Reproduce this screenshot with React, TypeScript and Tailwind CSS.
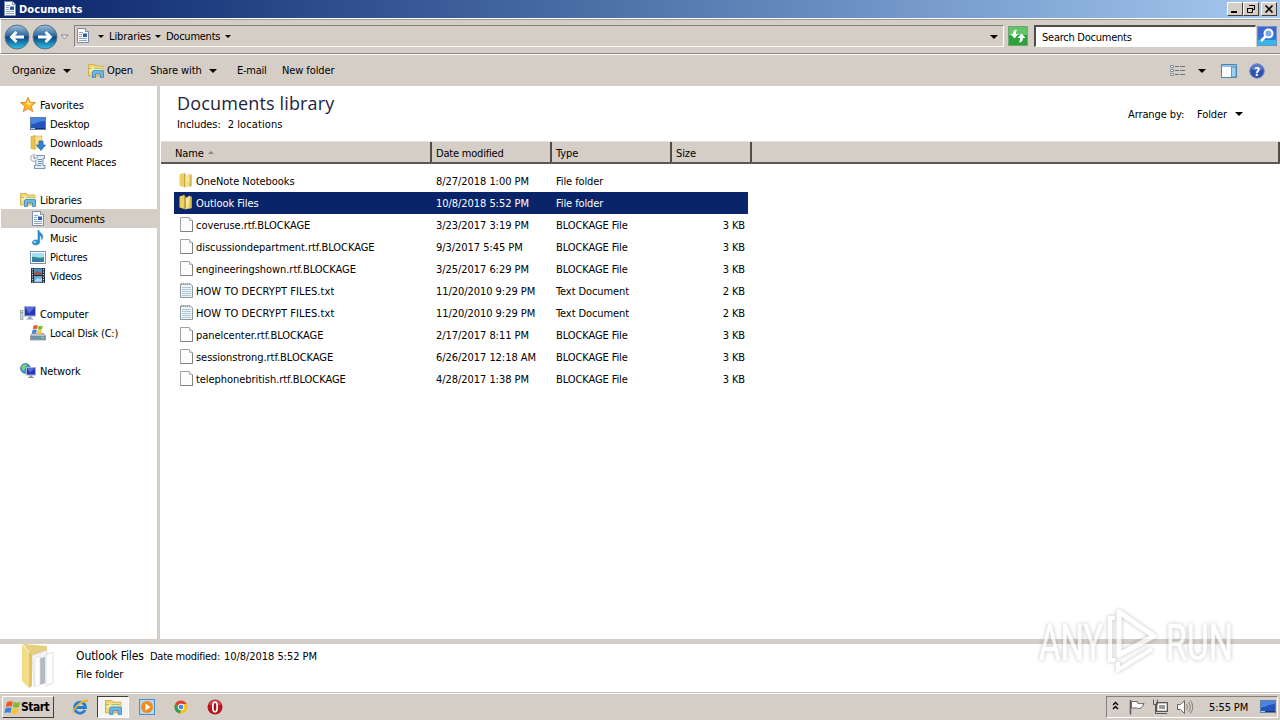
import React from 'react';

type IconProps = { className?: string };

const Svg = ({ size = 16, children }: { size?: number; children: React.ReactNode }) => (
  <svg width={size} height={size} viewBox="0 0 16 16" className="shrink-0">
    {children}
  </svg>
);

const DocIcon = () => (
  <Svg>
    <path d="M2.500.5h8l3 3v11h-11z" fill="#fcfdff" stroke="#7b8eab" />
    <path d="M10.500.5v3h3" fill="#dfe8f5" stroke="#7b8eab" />
    <path d="M4 4.500h4M4 6.500h3M4 8.500h3M4 10.500h8M4 12.500h8" stroke="#8fa3c0" />
    <rect x="8" y="5.500" width="4" height="3.500" fill="#2b5fae" />
  </Svg>
);

const StarIcon = () => (
  <Svg>
    <path d="M8 .3l2.100 5 5.300.4-4.100 3.500 1.400 5.300L8 11.600 3.300 14.500l1.400-5.300L.6 5.700l5.300-.4z" fill="#fdb827" stroke="#e58a2c" />
    <path d="M8 2.500l1.400 3.600 3.200.4-3 1.500L8 7.500 5 6.500l1.700-.6z" fill="#ffe680" />
  </Svg>
);

const DesktopIcon = () => (
  <Svg>
    <rect x=".5" y="1.500" width="15" height="12" fill="#2356b8" stroke="#5f7cab" />
    <path d="M1 2h14v3C9 5 6 8 1 8.500z" fill="#4b84df" />
    <path d="M1 12.500h14" stroke="#16346e" />
    <path d="M1 12.500h4" stroke="#a9d4f5" />
  </Svg>
);

const DownloadsIcon = () => (
  <Svg>
    <path d="M1 1.500l4-1v14l-4-1z" fill="#e9c452" stroke="#c9a23a" strokeWidth=".6" />
    <path d="M5 1h7v12H5z" fill="#f8e08b" stroke="#d2b04c" strokeWidth=".6" />
    <path d="M9 6h4v4h2.500L11 15.500 6.500 10H9z" fill="#2f83d6" stroke="#1b5ba5" strokeWidth=".7" />
  </Svg>
);

const RecentIcon = () => (
  <Svg>
    <path d="M5 1.500h9.500v3h-1.500v7h2v3H4.500v-3H6z" fill="#e3ebf4" stroke="#7d92ab" />
    <path d="M8 5.500h4M8 7.500h4M8 9.500h4M7 11.500h4" stroke="#6f92bd" />
    <circle cx="4" cy="4" r="3.400" fill="#f4f8fc" stroke="#a0abb8" />
    <path d="M4 2v2.300h1.800" fill="none" stroke="#4b5f78" strokeWidth=".8" />
  </Svg>
);

const LibraryIcon = ({ size = 16 }: { size?: number }) => (
  <Svg size={size}>
    <path d="M.5 1.500h6l1 1.500h7.500v10H.5z" fill="#f3d66f" stroke="#c9a843" strokeWidth=".8" />
    <path d="M2 4.300h12.500v4.500H1.500z" fill="#fbedaa" />
    <path d="M1 5.300h3M6 5.300h8" stroke="#79b86a" strokeWidth=".8" />
    <path d="M4.500 14.500V9q0-1.500 1.500-1.500h8q1.500 0 1.500 1.500v5.500h-3V11h-5v3.500z" fill="#6db7e8" stroke="#3c83bd" strokeWidth=".8" />
  </Svg>
);

const MusicIcon = () => (
  <Svg>
    <path d="M8.500 0c.5 2.800 4.800 3.500 4.300 7.500-.1 1-.6 1.700-1.100 2.200.5-2.500-.8-3.700-2-4.200V12c0 1.700-1.800 3-4 3-2 0-3.500-.9-3.500-2.400 0-1.700 2-3 4.300-2.600.7.100 1.200.3 1.500.5V0z" fill="#2b93d1" stroke="#1c6ca8" strokeWidth=".5" />
    <ellipse cx="4.800" cy="12" rx="1.500" ry="1" fill="#9ddcf5" />
  </Svg>
);

const PicturesIcon = () => (
  <Svg>
    <rect x=".5" y="2.500" width="15" height="12" fill="#fff" stroke="#7690ad" />
    <rect x="2" y="4" width="12" height="9" fill="#a8dcf5" />
    <path d="M2 8c4-1 6 2 12 0v5H2z" fill="#2f8f86" />
    <path d="M2 11q6-1.500 12 0v2H2z" fill="#3a78b5" />
  </Svg>
);

const VideosIcon = () => (
  <Svg>
    <rect x="1" y="0" width="14" height="15" fill="#26313e" />
    <rect x="4" y=".5" width="8" height="6.500" fill="#4b92c9" />
    <rect x="4" y="8" width="8" height="6.500" fill="#5fa7dd" />
    <path d="M4 5.500l3-3 2 2 1-1 2 3V7H4z" fill="#9a5947" />
    <path d="M5 12.500l3-3 2 2 2-2v4H5z" fill="#b8dcf4" />
    <path d="M2.500 1v14M13.500 1v14" stroke="#d6dde4" strokeDasharray="1.200 1.300" />
  </Svg>
);

const ComputerIcon = () => (
  <Svg>
    <rect x=".5" y="4.500" width="2.500" height="9" fill="#c9d4d6" stroke="#8e9c9e" strokeWidth=".7" />
    <path d="M1 6.500h1.500" stroke="#58b148" />
    <rect x="4.500" y=".5" width="11" height="9.500" fill="#2638b8" stroke="#a7b3c6" />
    <path d="M5 1h10L9 7.500z" fill="#6d83ec" opacity=".7" />
    <path d="M8.500 10.500h3v2h2v1h-7v-1h2z" fill="#909caa" />
  </Svg>
);

const Flag = () => (
  <>
    <path d="M3.500 2.500Q5.500 1 7.800 2L7 5.500Q5 4.600 2.700 6z" fill="#ee5a24" />
    <path d="M8.500 2.200q2.200 1 4.500-.2L12 5.700Q9.800 6.800 7.700 5.700z" fill="#7ebd2e" />
    <path d="M2.500 6.700q2.200-1.300 4.400-.4L6 9.800Q4 8.900 1.700 10z" fill="#3c83de" />
    <path d="M7.500 6.500q2.200 1 4.500-.2l-1 3.700q-2.200 1-4.300 0z" fill="#fbc52c" />
  </>
);

const DiskIcon = () => (
  <Svg>
    <path d="M2.500 8.500h11l2 2v4.500H.5v-4.500z" fill="#b8c1ca" stroke="#73818f" strokeWidth=".7" />
    <path d="M1 11h14v3.500H1z" fill="#6e92a8" />
    <path d="M11 12.500h3" stroke="#7cf27a" />
    <g transform="translate(0 -1.500)">
      <Flag />
    </g>
  </Svg>
);

const NetworkIcon = () => (
  <Svg>
    <circle cx="5.500" cy="5.500" r="5" fill="#3b96cf" stroke="#2b6e9f" strokeWidth=".6" />
    <path d="M2 3q3-3 5-1L5 5 4 8Q1 7 2 3z" fill="#7cd37a" />
    <rect x="6.500" y="4.500" width="9" height="7.500" fill="#2638b8" stroke="#a7b3c6" />
    <path d="M7 5h8l-5 4.500z" fill="#6d83ec" opacity=".7" />
    <path d="M9.500 12.500h3V14h1.500v1H8v-1h1.500z" fill="#8994a5" />
  </Svg>
);

const FolderIcon = () => (
  <Svg>
    <path d="M.5 1.500L5 0v14L.5 12.500z" fill="#eccf68" />
    <path d="M5 0l1.500 1v13.500L5 14z" fill="#c9a437" />
    <path d="M6.500 3L11 .5v12.500l-4.500 1.500z" fill="#f3df8b" />
    <path d="M11 1.500h1.800v11.500L10 14z" fill="#d8bb54" />
    <path d="M8 4v4" stroke="#fff6cf" />
  </Svg>
);

const BlankFileIcon = () => (
  <Svg>
    <path d="M1.500.5h9l3 3v11h-12z" fill="#fcfcfc" stroke="#a0a0a0" />
    <path d="M1.500 14.500h12v-11" fill="none" stroke="#808080" />
    <path d="M10.500.5v3h3" fill="#ececec" stroke="#b4b4b4" />
  </Svg>
);

const TextFileIcon = () => (
  <Svg>
    <path d="M1.500 1h10l2 2v11.500h-12z" fill="#eef4f7" stroke="#8d989d" />
    <path d="M3 4.500h9M3 6.500h9M3 8.500h9M3 10.500h9M3 12.500h9" stroke="#9fbccb" strokeWidth=".8" />
    <path d="M2 1h10" stroke="#6f7d84" strokeDasharray="1 1" />
  </Svg>
);

const BigFolderIcon = () => (
  <svg width="36" height="46" viewBox="0 0 36 46" className="shrink-0">
    <path d="M3 0l24 2v6l-15 3z" fill="#e5cf80" />
    <path d="M12 12l15-6v32l-13 4z" fill="#f4f4f4" stroke="#d8d8d8" strokeWidth=".7" />
    <path d="M20 14l5-1v26l-5 2z" fill="#b3bac4" />
    <path d="M15 14l5-2v29l-5 2z" fill="#fff" stroke="#dedede" strokeWidth=".7" />
    <path d="M26 11l7-3v31l-7 3z" fill="#fff" stroke="#d3d3d3" strokeWidth=".7" />
    <path d="M2 0l7 8v36l-7-7z" fill="#f3dd88" />
    <path d="M9 8l3 2v32l-3 2z" fill="#e0c467" />
  </svg>
);

const Caret = ({ className = '' }: IconProps) => (
  <svg width="8" height="4" viewBox="0 0 8 4" className={`shrink-0 ${className}`}>
    <path d="M0 0h8L4 4z" fill="currentColor" />
  </svg>
);

const NavButton = ({ flip = false }: { flip?: boolean }) => (
  <svg width="26" height="26" viewBox="0 0 26 26" className="shrink-0">
    <defs>
      <linearGradient id="orb" x1="0" y1="0" x2="0" y2="1">
        <stop offset="0" stopColor="#9fc0da" />
        <stop offset=".45" stopColor="#2d689f" />
        <stop offset=".5" stopColor="#0d447e" />
        <stop offset="1" stopColor="#2ec3e8" />
      </linearGradient>
    </defs>
    <circle cx="13" cy="13" r="12" fill="url(#orb)" stroke="#5b7289" />
    <g transform={flip ? 'translate(26 0) scale(-1 1)' : undefined}>
      <path d="M20 13H8M12.500 8L7.500 13l5 5" fill="none" stroke="#fff" strokeWidth="2.800" />
    </g>
  </svg>
);

const places = [
  {
    label: 'Favorites', icon: <StarIcon />, children: [
      { label: 'Desktop', icon: <DesktopIcon /> },
      { label: 'Downloads', icon: <DownloadsIcon /> },
      { label: 'Recent Places', icon: <RecentIcon /> },
    ],
  },
  {
    label: 'Libraries', icon: <LibraryIcon />, children: [
      { label: 'Documents', icon: <DocIcon />, active: true },
      { label: 'Music', icon: <MusicIcon /> },
      { label: 'Pictures', icon: <PicturesIcon /> },
      { label: 'Videos', icon: <VideosIcon /> },
    ],
  },
  {
    label: 'Computer', icon: <ComputerIcon />, children: [
      { label: 'Local Disk (C:)', icon: <DiskIcon /> },
    ],
  },
  { label: 'Network', icon: <NetworkIcon />, children: [] },
] as { label: string; icon: React.ReactNode; children: { label: string; icon: React.ReactNode; active?: boolean }[] }[];

const files = [
  { name: 'OneNote Notebooks', date: '8/27/2018 1:00 PM', type: 'File folder', size: '' },
  { name: 'Outlook Files', date: '10/8/2018 5:52 PM', type: 'File folder', size: '', selected: true },
  { name: 'coveruse.rtf.BLOCKAGE', date: '3/23/2017 3:19 PM', type: 'BLOCKAGE File', size: '3 KB' },
  { name: 'discussiondepartment.rtf.BLOCKAGE', date: '9/3/2017 5:45 PM', type: 'BLOCKAGE File', size: '3 KB' },
  { name: 'engineeringshown.rtf.BLOCKAGE', date: '3/25/2017 6:29 PM', type: 'BLOCKAGE File', size: '3 KB' },
  { name: 'HOW TO DECRYPT FILES.txt', date: '11/20/2010 9:29 PM', type: 'Text Document', size: '2 KB' },
  { name: 'HOW TO DECRYPT FILES.txt', date: '11/20/2010 9:29 PM', type: 'Text Document', size: '2 KB' },
  { name: 'panelcenter.rtf.BLOCKAGE', date: '2/17/2017 8:11 PM', type: 'BLOCKAGE File', size: '3 KB' },
  { name: 'sessionstrong.rtf.BLOCKAGE', date: '6/26/2017 12:18 AM', type: 'BLOCKAGE File', size: '3 KB' },
  { name: 'telephonebritish.rtf.BLOCKAGE', date: '4/28/2017 1:38 PM', type: 'BLOCKAGE File', size: '3 KB' },
];

function fileIcon(type: string) {
  if (type === 'File folder') return <FolderIcon />;
  if (type === 'Text Document') return <TextFileIcon />;
  return <BlankFileIcon />;
}

function TitleBar() {
  const button = 'flex h-[14px] w-4 items-center justify-center border border-t-white border-l-white border-r-[#404040] border-b-[#404040] bg-[#d5cec7]';
  return (
    <div className="flex h-[18px] shrink-0 items-center bg-linear-to-r from-[#0a246a] to-[#a6caf0] pr-[3px] pl-[2px]">
      <DocIcon />
      <span className="ml-px flex-1 text-[11px] font-bold tracking-[0.1px] text-white">Documents</span>
      <div className={button}>
        <svg width="10" height="10"><path d="M1 8h6" stroke="#000" strokeWidth="2" /></svg>
      </div>
      <div className={button}>
        <svg width="10" height="10">
          <path d="M3.500 1.500h5v4h-2M3 1.500h6M1.500 4.500h5v4h-5zM1 4.500h6" fill="none" stroke="#000" />
        </svg>
      </div>
      <div className={`${button} ml-[2px]`}>
        <svg width="10" height="10"><path d="M1.500 1.500l7 7M8.500 1.500l-7 7" stroke="#000" strokeWidth="1.600" /></svg>
      </div>
    </div>
  );
}

function AddressBar() {
  return (
    <div className="flex h-[36px] shrink-0 items-center border-t border-b border-l border-t-white border-b-[#8a857f] border-l-white bg-[#d5cec7] pl-[3px] shadow-[inset_0_1px_0_#a09a94]">
      <div className="mt-px flex items-center gap-[2px] rounded-full">
        <NavButton />
        <NavButton flip />
      </div>
      <svg width="9" height="6" className="mt-[2px] ml-[2px]">
        <path d="M1 1h7L4.500 5z" fill="#eee" stroke="#8e8983" />
      </svg>
      <div className="ml-[5px] flex h-[22px] w-[930px] items-center border border-t-[#85807b] border-r-white border-b-white border-l-[#85807b]">
        <DocIcon />
        <Caret className="ml-[7px] h-[3px] w-[6px]" />
        <span className="ml-[5px] w-[41px]">Libraries</span>
        <Caret className="ml-[5px] h-[3px] w-[6px]" />
        <span className="ml-[5px] w-[54px] tracking-[-0.25px]">Documents</span>
        <Caret className="ml-[5px] h-[3px] w-[6px]" />
        <Caret className="mt-px mr-[5px] ml-auto" />
      </div>
      <svg width="20" height="20" className="ml-[4px] shrink-0">
        <rect x=".5" y=".5" width="19" height="19" fill="#29a33a" stroke="#6fa777" />
        <rect x="1" y="1" width="18" height="8" fill="#62c46a" />
        <path d="M8 3.500C5.500 4 5 6 5 8H2.500l4 4.500 4-4.500H8C8 6.500 8 5.500 9 4z" fill="#fff" />
        <path d="M12 16.500c2.500-.5 3-2.500 3-4.500h2.500l-4-4.500-4 4.500H12c0 1.500 0 2.500-1 4z" fill="#fff" />
      </svg>
      <div className="ml-[6px] flex h-[22px] w-[222px] items-center border-t-2 border-r border-b border-l-2 border-t-[#504c48] border-r-white border-b-white border-l-[#504c48] bg-white pt-px pl-[6px] tracking-[-0.25px]">
        Search Documents
      </div>
      <svg width="20" height="20" className="ml-px shrink-0">
        <rect x=".5" y=".5" width="19" height="19" fill="#2b7bd4" stroke="#6b93cc" />
        <rect x="1" y="1" width="18" height="9" fill="#4266cf" />
        <path d="M1 14h18v5H1z" fill="#3bb4ea" />
        <circle cx="11.500" cy="7.500" r="4" fill="#7ba7ea" stroke="#fff" strokeWidth="2" />
        <path d="M8.500 10.500L4 15" stroke="#fff" strokeWidth="2.500" />
      </svg>
    </div>
  );
}

function Toolbar() {
  return (
    <div className="flex h-[32px] shrink-0 items-center border-t border-white bg-[#d5cec7] pl-3">
      <span className="w-[51px]">Organize</span>
      <Caret />
      <div className="ml-[17px] flex w-[62px] items-center gap-[3px]">
        <LibraryIcon />
        <span>Open</span>
      </div>
      <span className="w-[59px]">Share with</span>
      <Caret />
      <span className="ml-5 w-[45px] tracking-[-0.25px]">E-mail</span>
      <span>New folder</span>
      <svg width="15" height="12" className="ml-auto">
        <path d="M.5.5h3v2h-3zM.5 4.500h3v2h-3zM.5 8.500h3v2h-3z" fill="#fff" stroke="#7b8ca2" />
        <path d="M5 1.500h4M10 1.500h5M5 5.500h4M10 5.500h5M5 9.500h4M10 9.500h5" stroke="#6f747c" />
      </svg>
      <Caret className="ml-[13px]" />
      <svg width="16" height="14" className="ml-[15px]">
        <path d="M.5.5h15v13H.5z" fill="#fff" stroke="#4a86b5" />
        <path d="M1 2h14" stroke="#8fc0df" strokeWidth="2" />
        <path d="M10.500 3h4.500v10h-4.500z" fill="#9bd1ec" stroke="#4a86b5" strokeWidth=".8" />
      </svg>
      <svg width="16" height="16" className="mr-[15px] ml-[12px]">
        <circle cx="8" cy="8" r="7.300" fill="#2c50b4" stroke="#7f92bd" />
        <path d="M2 6a6 5 0 0 1 12 0q-6 3-12 0z" fill="#7794dd" opacity=".6" />
        <text x="8" y="12.500" textAnchor="middle" fontSize="12" fontWeight="700" fill="#fff">?</text>
      </svg>
    </div>
  );
}

function Sidebar() {
  return (
    <div className="flex w-[160px] shrink-0 flex-col gap-[19px] border-r-[3px] border-[#d5cec7] pt-[9px]">
      {places.map((group) => (
        <div key={group.label}>
          <div className="flex h-[19px] items-center gap-1 pl-5">
            {group.icon}
            <span className="pt-[2px]">{group.label}</span>
          </div>
          {group.children.map((item) => (
            <div
              key={item.label}
              className={`ml-px flex h-[19px] items-center gap-1 pl-[29px] tracking-[-0.2px] ${item.active ? 'bg-[#d5cec7]' : ''}`}
            >
              {item.icon}
              <span className="pt-[2px]">{item.label}</span>
            </div>
          ))}
        </div>
      ))}
    </div>
  );
}

function FileList() {
  const head = 'flex h-full items-center border-r-2 border-r-[#504c48] pt-[2px] pl-1';
  return (
    <div className="flex min-w-0 flex-1 flex-col">
      <div className="flex h-[55px] justify-between pr-9 pl-[17px]">
        <div>
          <h1 className="mt-1 font-['Open_Sans'] text-[18px] leading-[26px] tracking-[0.15px] text-[#1d2440]">Documents library</h1>
          <p className="mt-[2px] leading-[13px]">
            Includes:<span className="ml-[7px] tracking-[0.1px]">2 locations</span>
          </p>
        </div>
        <div className="mt-[21px] flex h-[14px] items-center">
          <span className="w-[69px]">Arrange by:</span>
          <span className="w-[38px]">Folder</span>
          <Caret className="mr-px" />
        </div>
      </div>
      <div className="ml-px flex h-[23px] items-center border-t border-b-2 border-t-[#e6e2de] border-b-[#5b5753] bg-[#d5cec7]">
        <div className={`${head} w-[271px] pl-[14px]`}>
          Name
          <svg width="6" height="3" className="mb-[2px] ml-[4px]"><path d="M3 0l3 3H0z" fill="#8e8983" /></svg>
        </div>
        <div className={`${head} w-[120px] tracking-[-0.2px]`}>Date modified</div>
        <div className={`${head} w-[120px]`}>Type</div>
        <div className={`${head} w-[80px]`}>Size</div>
        <div className="h-full flex-1 border-r-2 border-[#504c48]" />
      </div>
      <div className="mt-[6px] ml-[14px] w-[574px]">
        {files.map((file, i) => (
          <div
            key={i}
            className={`flex h-[22px] items-center pl-[5px] ${file.selected ? 'bg-[#0a246a] text-white' : ''}`}
          >
            <div className="flex w-[257px] items-center gap-px">
              {fileIcon(file.type)}
              <span className={file.type === 'Text Document' ? 'tracking-[0.07px]' : 'tracking-[-0.05px]'}>{file.name}</span>
            </div>
            <span className="w-[120px] tracking-[-0.05px]">{file.date}</span>
            <span className="w-[120px]">{file.type}</span>
            <span className="w-[69px] text-right">{file.size}</span>
          </div>
        ))}
      </div>
    </div>
  );
}

function DetailsPane() {
  return (
    <div className="flex h-[54px] shrink-0 border-t-[5px] border-b border-t-[#d5cec7] border-b-[#c9c3bc] bg-white pl-5">
      <BigFolderIcon />
      <div className="mt-1 ml-5">
        <div className="flex h-[15px] items-center">
          <span className="w-[74px] text-[12px]">Outlook Files</span>
          <span className="w-[74px] pt-px tracking-[-0.25px]">Date modified:</span>
          <span className="pt-px tracking-[-0.05px]">10/8/2018 5:52 PM</span>
        </div>
        <div className="mt-1 leading-[15px]">File folder</div>
      </div>
    </div>
  );
}

function Taskbar() {
  return (
    <div className="flex h-[27px] shrink-0 items-center border-t border-white bg-[#d5cec7] pl-[2px]">
      <div className="flex h-[22px] w-[52px] items-center border border-t-white border-r-[#404040] border-b-[#404040] border-l-white pl-px text-[12px] font-bold tracking-[-0.5px]">
        <svg width="17" height="17" viewBox="1.500 0.500 12 11"><Flag /></svg>
        Start
      </div>
      <svg width="18" height="18" viewBox="0 0 18 18" className="ml-[17px]">
        <path d="M14 12A5.500 5.500 0 1 1 14.500 9.500H5" fill="none" stroke="#2380d1" strokeWidth="2.800" />
        <path d="M2 16.500C-1 12 11 0 17 1.500c0 2 0 2-1 3 0-3-13 4-14 12z" fill="#e9b82c" />
      </svg>
      <div className="ml-[8px] flex h-[22px] w-8 items-center justify-center border border-t-[#404040] border-r-white border-b-white border-l-[#404040] bg-[#f6f4f2]">
        <LibraryIcon size={17} />
      </div>
      <svg width="16" height="16" className="ml-[10px]">
        <rect x=".5" y=".5" width="15" height="15" fill="#b6d9f2" stroke="#4b8dcb" />
        <circle cx="8" cy="8" r="6" fill="#f28a1c" />
        <path d="M6.500 4.500v7l5-3.500z" fill="#fff" />
      </svg>
      <svg width="14" height="14" viewBox="0 0 14 14" className="ml-[19px]">
        <circle cx="7" cy="7" r="6.500" fill="#fbc116" />
        <path d="M1.300 3.800A6.500 6.500 0 0 1 12.700 4H7L4.500 9z" fill="#de4335" />
        <path d="M1.300 3.800L4.500 9 7 10l-1 3.500A6.500 6.500 0 0 1 1.300 3.800z" fill="#2f9e4f" />
        <circle cx="7" cy="7" r="2.900" fill="#4a86e8" stroke="#fff" />
      </svg>
      <svg width="16" height="16" className="ml-[19px]">
        <circle cx="8" cy="8" r="7.500" fill="#b81420" />
        <path d="M2 6a6 5 0 0 1 12 0z" fill="#e3626a" opacity=".6" />
        <ellipse cx="8" cy="8" rx="2.200" ry="4.800" fill="#a3101b" stroke="#fff" strokeWidth="1.800" />
      </svg>
      <div className="mr-[2px] ml-auto flex h-[22px] w-[172px] items-center border border-t-[#85807b] border-r-white border-b-white border-l-[#85807b] pl-[5px]">
        <svg width="7" height="10" className="mb-[2px]"><path d="M1 4l2.500-2.500L6 4M1 8l2.500-2.500L6 8" fill="none" stroke="#000" strokeWidth="1.400" /></svg>
        <svg width="16" height="16" className="ml-[10px]">
          <path d="M1.500 1v14.500" stroke="#5b5753" strokeWidth="1.500" />
          <path d="M2.500 2.500h6v1.500c2 1 4 .5 6.500.5-1 2-2 4-4 5-2 .5-3-1-5-.5H2.500z" fill="#fff" stroke="#6b6661" />
        </svg>
        <svg width="17" height="16" className="ml-[7px]">
          <rect x="4.500" y="3.500" width="11" height="9" fill="#c4c4c4" stroke="#5b5753" />
          <rect x="6.500" y="5.500" width="7" height="5" fill="#9a9a9a" stroke="#fff" />
          <path d="M6 14.500h9" stroke="#5b5753" />
          <path d="M1.500.5v5h4v-5M3.500 5.500v9h3" fill="none" stroke="#5b5753" />
        </svg>
        <svg width="17" height="16" className="ml-[8px]">
          <path d="M.5 5.500h3l4-4v13l-4-4h-3z" fill="#fff" stroke="#6b6661" />
          <path d="M9.500 5q2 3 0 6M11.500 3q3.500 5 0 10M13.500 1.500q4.500 6.500 0 13" fill="none" stroke="#85807b" />
        </svg>
        <span className="ml-[15px] w-[51px]">5:55 PM</span>
        <DesktopIcon />
      </div>
    </div>
  );
}

// Half transparent logo in the lower right corner of the recording
function Watermark() {
  return (
    <svg width="244" height="80" className="absolute top-[604px] left-[1034px] drop-shadow-[0_0_2px_rgba(0,0,0,0.35)]" opacity=".7">
      <g fill="#fff" stroke="#fff" strokeWidth=".6" fontFamily="Roboto" fontSize="50">
        <text x="5" y="56" textLength="64" lengthAdjust="spacingAndGlyphs">ANY</text>
        <text x="132" y="56" textLength="67" lengthAdjust="spacingAndGlyphs">RUN</text>
      </g>
      <path d="M85 9v43l35-19z" fill="none" stroke="#fff" strokeWidth="5" strokeLinejoin="round" transform="translate(0 -1)" />
      <path d="M81 14h-5v42h5M84 58v8l34-21" fill="none" stroke="#fff" strokeWidth="4" />
    </svg>
  );
}

export default function App() {
  return (
    <div className="relative flex h-[720px] w-[1280px] flex-col overflow-hidden bg-white font-['DejaVu_Sans_Condensed','DejaVu_Sans',sans-serif] text-[11px] leading-none tracking-[-0.1px] whitespace-nowrap text-black">
      <TitleBar />
      <AddressBar />
      <Toolbar />
      <div className="flex min-h-0 flex-1">
        <Sidebar />
        <FileList />
      </div>
      <DetailsPane />
      <Taskbar />
      <Watermark />
    </div>
  );
}
